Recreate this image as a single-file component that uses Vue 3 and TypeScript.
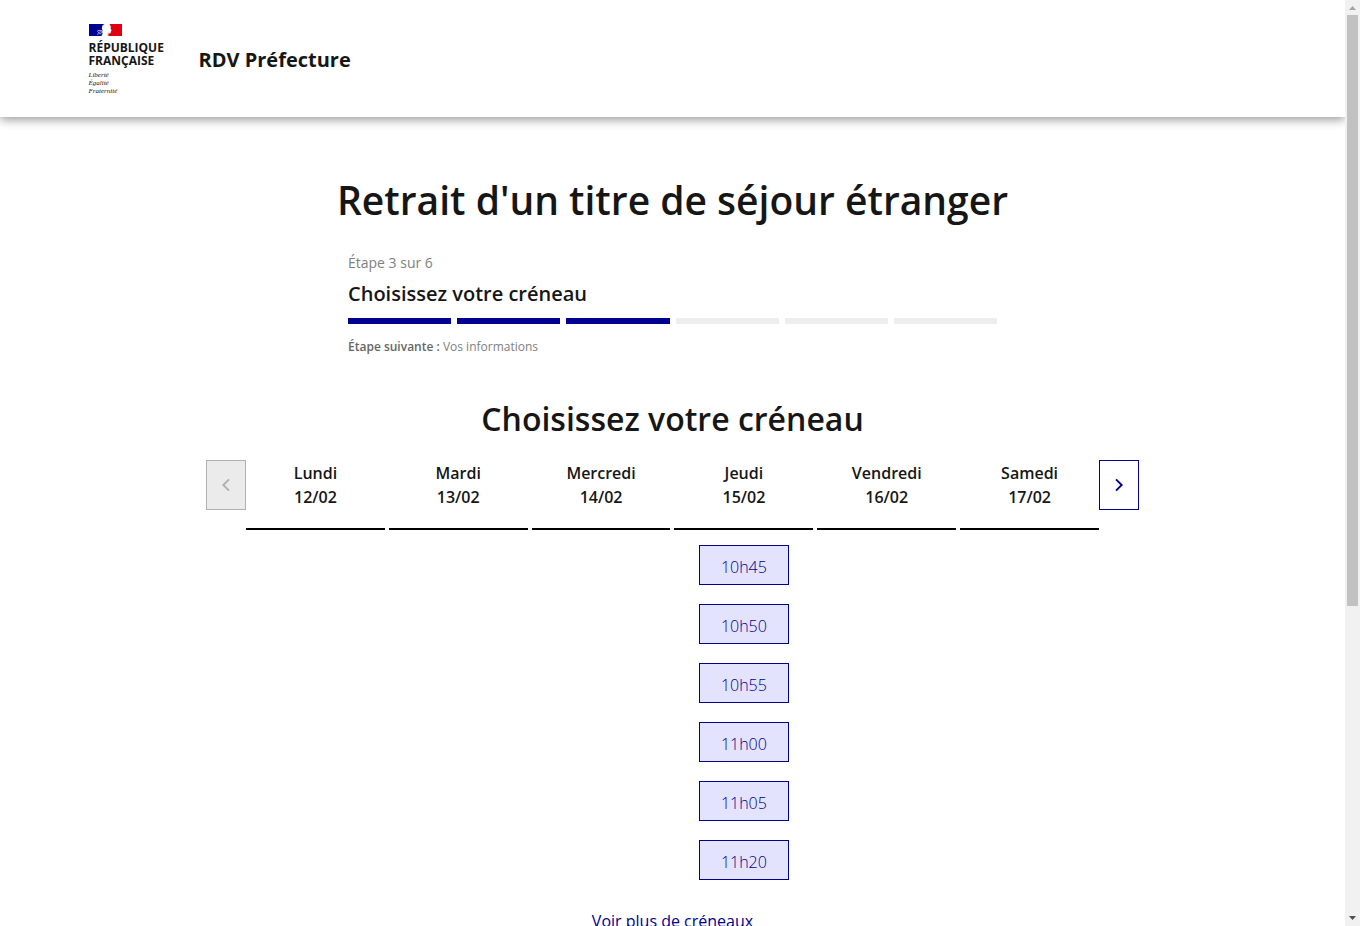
<script setup lang="ts">
interface Day {
  name: string
  date: string
  slots: string[]
}

const totalSteps = 6
const currentStep = 3

const days: Day[] = [
  { name: 'Lundi', date: '12/02', slots: [] },
  { name: 'Mardi', date: '13/02', slots: [] },
  { name: 'Mercredi', date: '14/02', slots: [] },
  { name: 'Jeudi', date: '15/02', slots: ['10h45', '10h50', '10h55', '11h00', '11h05', '11h20'] },
  { name: 'Vendredi', date: '16/02', slots: [] },
  { name: 'Samedi', date: '17/02', slots: [] },
]
</script>

<template>
  <div class="window">
    <div class="page">
      <header class="header">
        <div class="header-inner">
          <div class="brand">
            <svg class="flag" width="33" height="12" viewBox="0 0 33 12" aria-hidden="true">
              <rect width="16" height="12" fill="#000091" />
              <rect x="20" width="13" height="12" fill="#e1000f" />
              <path d="M15.4 0 13.4 1.6 12.8 4.4 13.6 6.2 12.6 8.4 13.8 9.6 12.4 12H18.6L19.4 9.8 21.6 9.2 21.8 7.4 22.6 6.4 21.6 4.6 21.8 2.2 20.4 0Z" fill="#fff" />
              <path d="M8 7.4 10 6.4 13 6.6M9 8.6 11.6 7.8 14 8.4M8.2 10.4 10.4 9.6 12.6 9.8" fill="none" stroke="#b4b4e0" stroke-width="0.9" />
              <path d="M18.8 8.8 20.2 9.8 22 9.4V12H18.6Z" fill="#e1000f" opacity="0.6" />
            </svg>
            <p class="state">RÉPUBLIQUE<br />FRANÇAISE</p>
            <p class="motto">Liberté<br />Égalité<br />Fraternité</p>
          </div>
          <p class="service">RDV Préfecture</p>
        </div>
      </header>

      <main class="content">
        <h1 class="title">Retrait d'un titre de séjour étranger</h1>

        <section class="stepper" aria-label="Progression">
          <p class="step-state">Étape {{ currentStep }} sur {{ totalSteps }}</p>
          <h2 class="step-title">Choisissez votre créneau</h2>
          <div class="step-bars" aria-hidden="true">
            <span v-for="n in totalSteps" :key="n" class="bar" :class="{ done: n <= currentStep }"></span>
          </div>
          <p class="step-next"><strong>Étape suivante :</strong> Vos informations</p>
        </section>

        <h2 class="subtitle">Choisissez votre créneau</h2>

        <section class="calendar" aria-label="Créneaux disponibles">
          <button class="nav" type="button" disabled aria-label="Semaine précédente">
            <svg width="16" height="16" viewBox="0 0 16 16" aria-hidden="true">
              <path d="M11 2.3 5.3 8l5.7 5.7" fill="none" stroke="currentColor" stroke-width="1.9" />
            </svg>
          </button>
          <div class="days">
            <div v-for="day in days" :key="day.date" class="day">
              <h3 class="day-head">{{ day.name }}<br />{{ day.date }}</h3>
              <div class="slots">
                <button v-for="slot in day.slots" :key="slot" class="slot" type="button">{{ slot }}</button>
              </div>
            </div>
          </div>
          <button class="nav" type="button" aria-label="Semaine suivante">
            <svg width="16" height="16" viewBox="0 0 16 16" aria-hidden="true">
              <path d="M5 2.3 10.7 8 5 13.7" fill="none" stroke="currentColor" stroke-width="1.9" />
            </svg>
          </button>
        </section>

        <a class="more" href="#">Voir plus de créneaux</a>
      </main>
    </div>

    <div class="scrollbar" aria-hidden="true">
      <svg width="15" height="15" viewBox="0 0 15 15"><path d="M4 10 7.5 6 11 10Z" fill="#a3a3a3" /></svg>
      <div class="track"><div class="thumb"></div></div>
      <svg width="15" height="15" viewBox="0 0 15 15"><path d="M4 5 7.5 9 11 5Z" fill="#505050" /></svg>
    </div>
  </div>
</template>

<style>
body {
  margin: 0;
  background: #fff;
}
</style>

<style scoped>
.window {
  display: flex;
  height: 100vh;
  color: #161616;
  font-family: "Open Sans", "Noto Sans", sans-serif;
  font-size: 16px;
  line-height: 24px;
}
.page {
  flex: 1;
  min-width: 0;
  overflow: hidden;
}
h1, h2, h3, p {
  margin: 0;
}
.header {
  box-shadow: 0 2px 10px rgba(0, 0, 0, 0.45);
}
.header-inner {
  display: flex;
  align-items: center;
  gap: 32px;
  max-width: 1168px;
  margin: 0 auto;
  padding: 24px 0 22px;
}
.brand {
  display: flex;
  flex-direction: column;
  min-width: 78px;
}
.flag {
  display: block;
}
.state {
  margin-top: 5px;
  font-size: 12px;
  font-weight: 700;
  line-height: 13px;
}
.motto {
  margin-top: 4px;
  font-family: "Liberation Serif", serif;
  font-size: 7px;
  font-style: italic;
  line-height: 8px;
}
.service {
  font-size: 20px;
  font-weight: 700;
  line-height: 28px;
}
.content {
  display: flex;
  flex-direction: column;
  align-items: center;
  padding: 59px 24px 0;
}
.title {
  font-size: 39px;
  font-weight: 600;
  line-height: 48px;
  text-align: center;
}
.stepper {
  width: 100%;
  max-width: 649px;
  margin-top: 27px;
}
.step-state {
  color: #808080;
  font-size: 14px;
}
.step-title {
  margin-top: 5px;
  font-size: 20px;
  font-weight: 600;
  line-height: 28px;
}
.step-bars {
  display: flex;
  gap: 6px;
  margin-top: 10px;
}
.bar {
  flex: 1;
  height: 6px;
  background: #eee;
}
.bar.done {
  background: #000091;
}
.step-next {
  margin-top: 13px;
  color: #808080;
  font-size: 12px;
  line-height: 20px;
}
.step-next strong {
  color: #666;
  font-weight: 600;
}
.subtitle {
  margin-top: 42px;
  font-size: 32px;
  font-weight: 600;
  line-height: 40px;
  text-align: center;
}
.calendar {
  display: flex;
  align-items: flex-start;
  width: 100%;
  max-width: 933px;
  margin-top: 21px;
}
.nav {
  display: flex;
  align-items: center;
  justify-content: center;
  width: 40px;
  height: 50px;
  padding: 0;
  border: 1px solid #000091;
  background: #fff;
  color: #000091;
}
.nav:disabled {
  border-color: #b0b0b0;
  background: #ebebeb;
  color: #b0b0b0;
}
.days {
  display: grid;
  flex: 1;
  grid-template-columns: repeat(6, 1fr);
  gap: 4px;
}
.day-head {
  padding: 1px 0 19px;
  border-bottom: 2px solid #000;
  font-size: 16px;
  font-weight: 600;
  line-height: 24px;
  text-align: center;
}
.slots {
  display: flex;
  flex-direction: column;
  align-items: center;
  gap: 19px;
  padding-top: 15px;
}
.slot {
  width: 90px;
  height: 40px;
  padding: 4px 0 0;
  border: 1px solid #000091;
  background: #e3e3fd;
  color: #000091;
  font: inherit;
  font-weight: 300;
}
.more {
  margin-top: 29px;
  color: #000091;
  font-weight: 500;
  text-decoration: none;
}
.scrollbar {
  display: flex;
  flex-direction: column;
  width: 15px;
  background: #f1f1f1;
}
.scrollbar svg {
  display: block;
}
.track {
  flex: 1;
  padding: 0 2px;
}
.thumb {
  height: 66%;
  background: #c1c1c1;
}
</style>
